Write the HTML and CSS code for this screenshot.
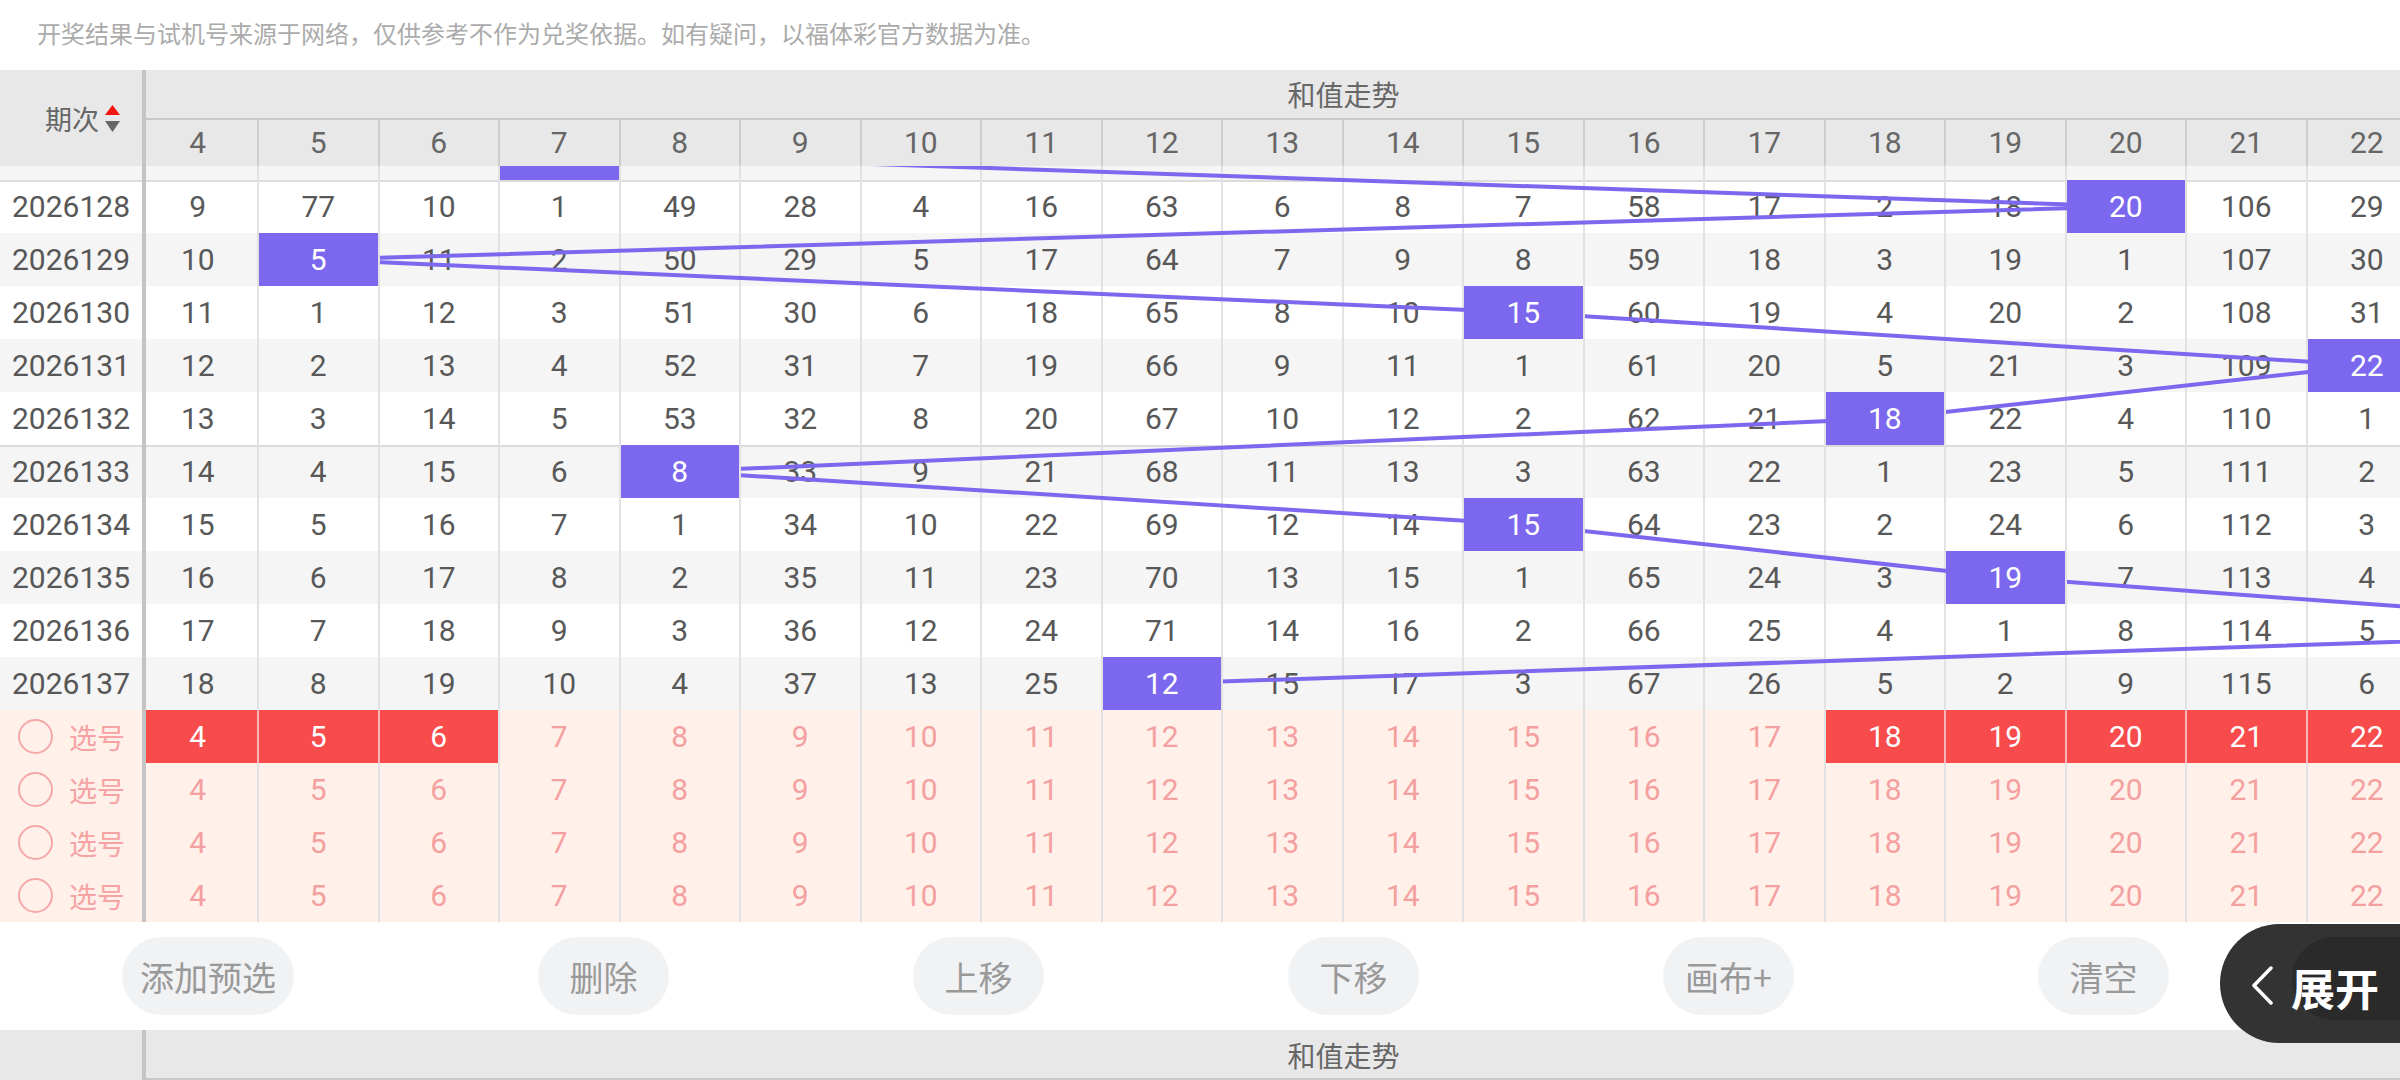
FILE: index.html
```html
<!DOCTYPE html>
<html lang="zh-CN">
<head>
<meta charset="utf-8">
<title>和值走势</title>
<link rel="stylesheet" href="styles.css">
</head>
<body>
<p class="notice">开奖结果与试机号来源于网络，仅供参考不作为兑奖依据。如有疑问，以福体彩官方数据为准。</p>

<section class="chart">
  <div class="lside">
    <div class="lhead">期次<svg class="sort" width="15" height="27" viewBox="0 0 15 27"><path d="M7.5 0L15 10H0z" fill="#f01414"/><path d="M0 16h15l-7.5 11z" fill="#666"/></svg></div>
    <div class="win">
      <div class="inner">
        <div class="lab g"></div>
        <div class="lab sep">2026128</div>
        <div class="lab g">2026129</div>
        <div class="lab">2026130</div>
        <div class="lab g">2026131</div>
        <div class="lab">2026132</div>
        <div class="lab g sep">2026133</div>
        <div class="lab">2026134</div>
        <div class="lab g">2026135</div>
        <div class="lab">2026136</div>
        <div class="lab g">2026137</div>
        <div class="lab plab"><i class="ring"></i>选号</div>
        <div class="lab plab"><i class="ring"></i>选号</div>
        <div class="lab plab"><i class="ring"></i>选号</div>
        <div class="lab plab"><i class="ring"></i>选号</div>
      </div>
    </div>
  </div>
  <div class="rside">
    <div class="rhead">
      <div class="title">和值走势</div>
      <div class="cols"><span>4</span><span>5</span><span>6</span><span>7</span><span>8</span><span>9</span><span>10</span><span>11</span><span>12</span><span>13</span><span>14</span><span>15</span><span>16</span><span>17</span><span>18</span><span>19</span><span>20</span><span>21</span><span>22</span></div>
    </div>
    <div class="win">
      <div class="inner shift">
        <svg class="trend" width="2290" height="583" viewBox="0 0 2290 583">
          <polyline points="421.5,26.5 1988,79.5 180.5,132.5 1385.5,185.5 2229,238.5 1747,291.5 542,344.5 1385.5,397.5 1867.5,450.5 2590.5,503.5 1024,556.5" fill="none" stroke="#7b68ee" stroke-width="4" stroke-linejoin="round"/>
        </svg>
        <div class="row g"><span></span><span></span><span></span><span class="hit"></span><span></span><span></span><span></span><span></span><span></span><span></span><span></span><span></span><span></span><span></span><span></span><span></span><span></span><span></span><span></span></div>
        <div class="row sep"><span>9</span><span>77</span><span>10</span><span>1</span><span>49</span><span>28</span><span>4</span><span>16</span><span>63</span><span>6</span><span>8</span><span>7</span><span>58</span><span>17</span><span>2</span><span>18</span><span class="hit">20</span><span>106</span><span>29</span></div>
        <div class="row g"><span>10</span><span class="hit">5</span><span>11</span><span>2</span><span>50</span><span>29</span><span>5</span><span>17</span><span>64</span><span>7</span><span>9</span><span>8</span><span>59</span><span>18</span><span>3</span><span>19</span><span>1</span><span>107</span><span>30</span></div>
        <div class="row"><span>11</span><span>1</span><span>12</span><span>3</span><span>51</span><span>30</span><span>6</span><span>18</span><span>65</span><span>8</span><span>10</span><span class="hit">15</span><span>60</span><span>19</span><span>4</span><span>20</span><span>2</span><span>108</span><span>31</span></div>
        <div class="row g"><span>12</span><span>2</span><span>13</span><span>4</span><span>52</span><span>31</span><span>7</span><span>19</span><span>66</span><span>9</span><span>11</span><span>1</span><span>61</span><span>20</span><span>5</span><span>21</span><span>3</span><span>109</span><span class="hit">22</span></div>
        <div class="row"><span>13</span><span>3</span><span>14</span><span>5</span><span>53</span><span>32</span><span>8</span><span>20</span><span>67</span><span>10</span><span>12</span><span>2</span><span>62</span><span>21</span><span class="hit">18</span><span>22</span><span>4</span><span>110</span><span>1</span></div>
        <div class="row g sep"><span>14</span><span>4</span><span>15</span><span>6</span><span class="hit">8</span><span>33</span><span>9</span><span>21</span><span>68</span><span>11</span><span>13</span><span>3</span><span>63</span><span>22</span><span>1</span><span>23</span><span>5</span><span>111</span><span>2</span></div>
        <div class="row"><span>15</span><span>5</span><span>16</span><span>7</span><span>1</span><span>34</span><span>10</span><span>22</span><span>69</span><span>12</span><span>14</span><span class="hit">15</span><span>64</span><span>23</span><span>2</span><span>24</span><span>6</span><span>112</span><span>3</span></div>
        <div class="row g"><span>16</span><span>6</span><span>17</span><span>8</span><span>2</span><span>35</span><span>11</span><span>23</span><span>70</span><span>13</span><span>15</span><span>1</span><span>65</span><span>24</span><span>3</span><span class="hit">19</span><span>7</span><span>113</span><span>4</span></div>
        <div class="row"><span>17</span><span>7</span><span>18</span><span>9</span><span>3</span><span>36</span><span>12</span><span>24</span><span>71</span><span>14</span><span>16</span><span>2</span><span>66</span><span>25</span><span>4</span><span>1</span><span>8</span><span>114</span><span>5</span></div>
        <div class="row g"><span>18</span><span>8</span><span>19</span><span>10</span><span>4</span><span>37</span><span>13</span><span>25</span><span class="hit">12</span><span>15</span><span>17</span><span>3</span><span>67</span><span>26</span><span>5</span><span>2</span><span>9</span><span>115</span><span>6</span></div>
        <div class="row pick"><span class="on">4</span><span class="on">5</span><span class="on last">6</span><span>7</span><span>8</span><span>9</span><span>10</span><span>11</span><span>12</span><span>13</span><span>14</span><span>15</span><span>16</span><span>17</span><span class="on">18</span><span class="on">19</span><span class="on">20</span><span class="on">21</span><span class="on">22</span></div>
        <div class="row pick"><span>4</span><span>5</span><span>6</span><span>7</span><span>8</span><span>9</span><span>10</span><span>11</span><span>12</span><span>13</span><span>14</span><span>15</span><span>16</span><span>17</span><span>18</span><span>19</span><span>20</span><span>21</span><span>22</span></div>
        <div class="row pick"><span>4</span><span>5</span><span>6</span><span>7</span><span>8</span><span>9</span><span>10</span><span>11</span><span>12</span><span>13</span><span>14</span><span>15</span><span>16</span><span>17</span><span>18</span><span>19</span><span>20</span><span>21</span><span>22</span></div>
        <div class="row pick"><span>4</span><span>5</span><span>6</span><span>7</span><span>8</span><span>9</span><span>10</span><span>11</span><span>12</span><span>13</span><span>14</span><span>15</span><span>16</span><span>17</span><span>18</span><span>19</span><span>20</span><span>21</span><span>22</span></div>
      </div>
    </div>
  </div>
</section>

<div class="tools">
  <button class="btn">添加预选</button>
  <button class="btn">删除</button>
  <button class="btn">上移</button>
  <button class="btn">下移</button>
  <button class="btn">画布+</button>
  <button class="btn">清空</button>
</div>

<section class="chart next">
  <div class="lside"><div class="lhead"></div></div>
  <div class="rside">
    <div class="rhead">
      <div class="title">和值走势</div>
    </div>
  </div>
</section>

<button class="expand"><svg class="chev" width="22" height="39" viewBox="0 0 22 39"><polyline points="20,2 3,19.5 20,37" fill="none" stroke="#fff" stroke-width="3.5" stroke-linecap="round" stroke-linejoin="round"/></svg><span class="exp-text">展开</span></button>
</body>
</html>
```
FILE: styles.css
```css
* { box-sizing: border-box; }
html, body { margin: 0; padding: 0; overflow: hidden; }
body {
  width: 2400px;
  height: 1080px;
  position: relative;
  background: #fff;
  font-family: Roboto, "Noto Sans CJK SC", sans-serif;
}

.notice {
  margin: 0;
  height: 70px;
  padding-left: 37px;
  line-height: 66px;
  font-size: 24px;
  color: #ababab;
  font-family: "Noto Sans CJK SC", sans-serif;
}

.chart { display: flex; }
.lside {
  width: 146px;
  flex: none;
  border-right: 4px solid #c4c4c4;
}
.rside {
  flex: 1;
  min-width: 0;
  overflow: hidden;
}

.lhead {
  height: 96px;
  background: #e8e8e8;
  display: flex;
  align-items: center;
  padding-left: 45px;
  gap: 6px;
  font-size: 27px;
  color: #666;
  font-family: "Noto Sans CJK SC", sans-serif;
}
.sort { flex: none; }

.rhead {
  background: #e8e8e8;
  margin-left: -7.5px;
}
.title {
  height: 50px;
  width: 3374px;
  margin-left: -482px;
  text-align: center;
  line-height: 48px;
  font-size: 28px;
  color: #666;
  font-family: "Noto Sans CJK SC", sans-serif;
  border-bottom: 2px solid #c8c8c8;
}
.cols { display: flex; height: 46px; }
.cols span {
  flex: none;
  width: 120.5px;
  border-right: 2px solid #cdcdcd;
  text-align: center;
  line-height: 46px;
  font-size: 30px;
  color: #666;
}

.win { height: 756px; overflow: hidden; }
.inner { margin-top: -39px; position: relative; }
.inner.shift { margin-left: -7.5px; }

.lab {
  height: 53px;
  display: flex;
  align-items: center;
  justify-content: center;
  font-size: 30px;
  color: #575757;
  background: #fff;
}
.g { background: #f5f5f5; }
.sep { box-shadow: inset 0 2px 0 #dcdcdc; }

.plab {
  justify-content: flex-start;
  padding-left: 18px;
  gap: 16px;
  font-size: 28px;
  color: #f5a3a3;
  background: #fff0ea;
  font-family: "Noto Sans CJK SC", sans-serif;
}
.ring {
  width: 35px;
  height: 35px;
  border: 2px solid #f5a8a8;
  border-radius: 50%;
}

.row { display: flex; height: 53px; }
.row span {
  flex: none;
  width: 120.5px;
  height: 53px;
  border-right: 2px solid #e2e2e2;
  text-align: center;
  line-height: 53px;
  font-size: 30px;
  color: #585858;
}
.row span.hit {
  position: relative;
  z-index: 2;
  background: #7b68ee;
  color: #fff;
}
.trend {
  position: absolute;
  left: 0;
  top: 0;
  z-index: 1;
  overflow: visible;
  pointer-events: none;
}

.pick { background: #fff0ea; }
.pick span { color: #f5a0a0; }
.pick span.on {
  background: #f84b4b;
  color: #fff;
  border-right-color: #f8b6b6;
}
.pick span.on.last { border-right-color: #e2e2e2; }

.tools {
  height: 108px;
  display: flex;
  align-items: center;
  gap: 244px;
  padding-left: 122px;
}
.btn {
  height: 78px;
  min-width: 131px;
  padding: 0 18px;
  border: 0;
  border-radius: 39px;
  background: #f1f2f4;
  color: #999;
  font-size: 34px;
  font-family: "Noto Sans CJK SC", sans-serif;
}

.next .lhead { height: 50px; }
.next .title { height: 50px; line-height: 50px; }

.expand {
  position: absolute;
  right: 0;
  top: 924px;
  width: 180px;
  height: 119px;
  border: 0;
  border-radius: 60px 0 0 60px;
  background: #333;
  display: flex;
  align-items: center;
  padding: 0 0 0 31px;
  gap: 18px;
  overflow: hidden;
  color: #fff;
  font-size: 44px;
  font-weight: 700;
  font-family: "Noto Sans CJK SC", sans-serif;
}
.expand::before {
  content: "";
  position: absolute;
  left: 72px;
  top: 13px;
  width: 160px;
  height: 83px;
  border-radius: 42px;
  background: #2a2a2a;
}
.chev { position: relative; flex: none; margin-top: 4px; }
.exp-text { position: relative; line-height: 1; margin-top: 6px; }
```
